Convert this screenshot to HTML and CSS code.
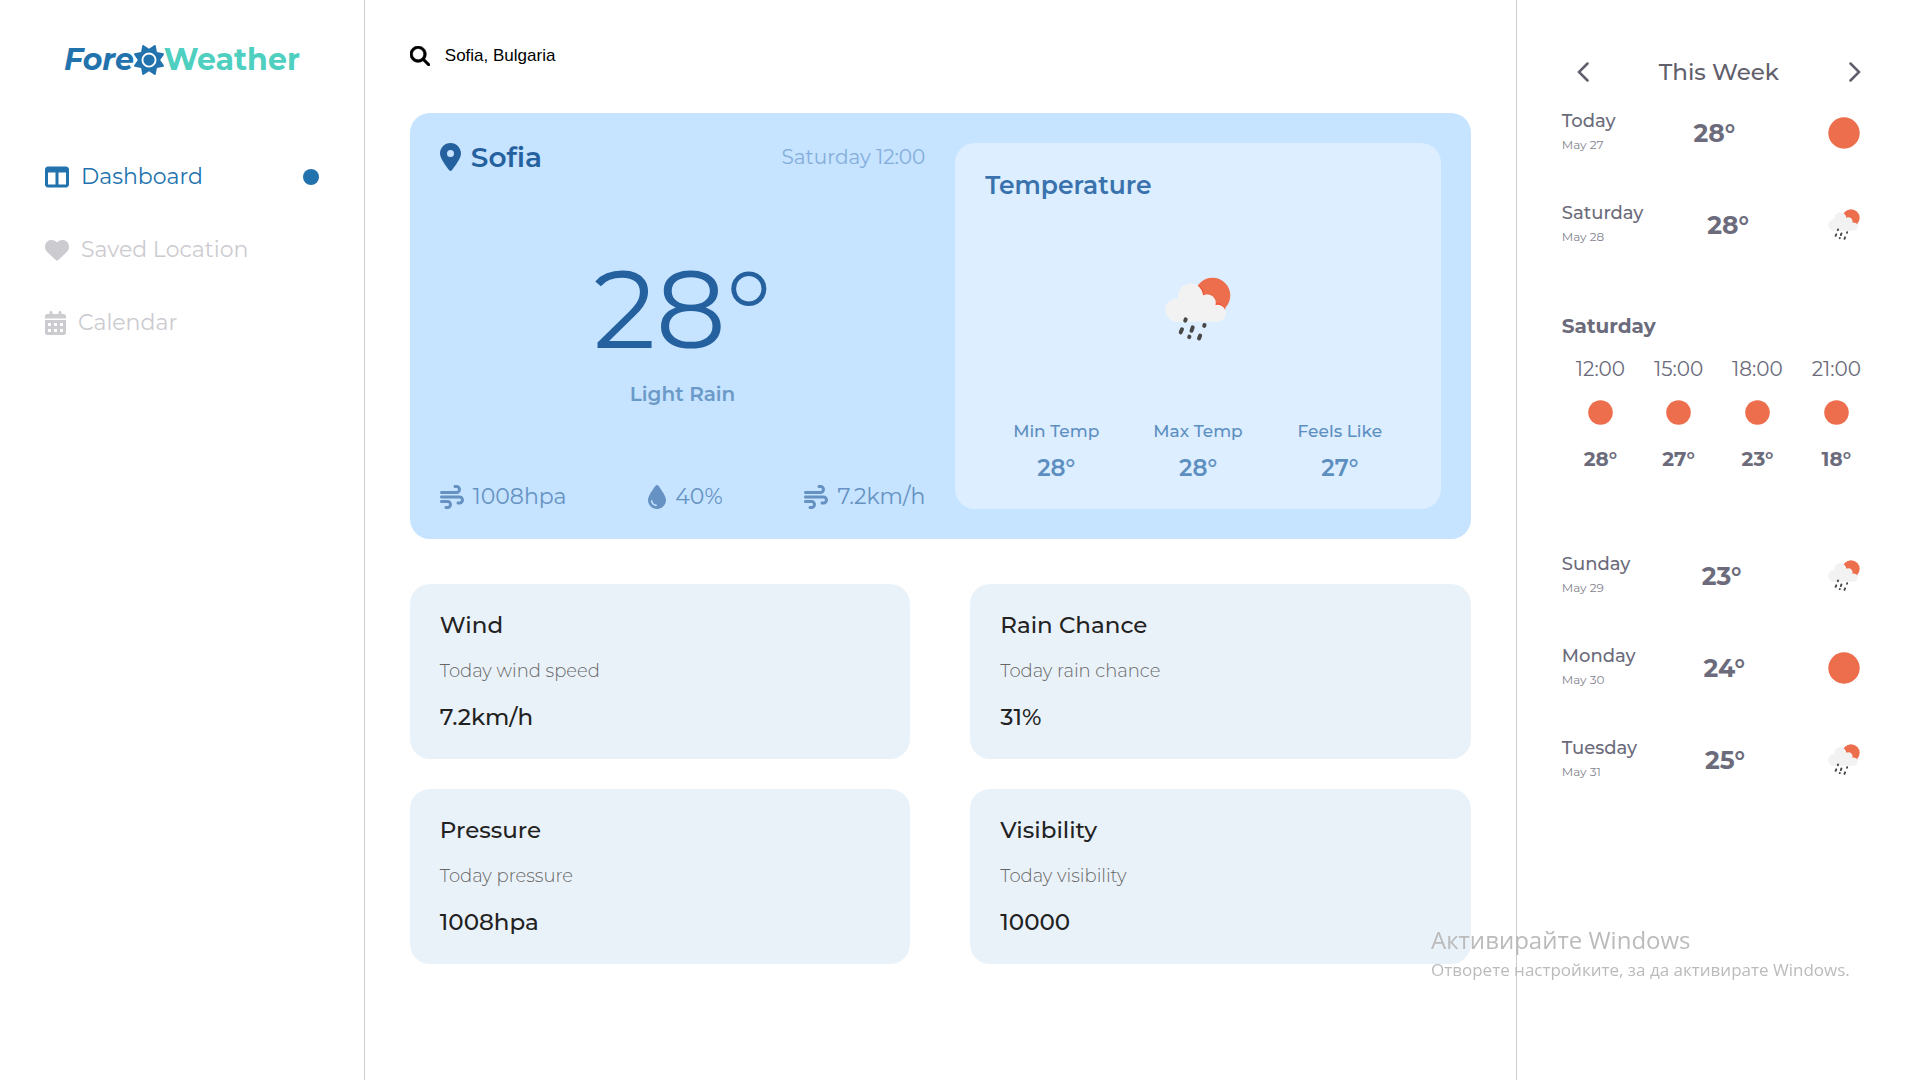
FILE: index.html
```html
<!DOCTYPE html>
<html lang="en">
<head>
<meta charset="utf-8">
<title>ForeWeather</title>
<link rel="stylesheet" href="styles.css">
</head>
<body>
<svg class="sprite" aria-hidden="true">
  <symbol id="sun-logo" viewBox="0 0 512 512"><path d="M361.5 1.2c5 2.1 8.6 6.6 9.6 11.9L391 121l107.9 19.8c5.3 1 9.8 4.6 11.9 9.6s1.5 10.7-1.6 15.2L446.9 256l62.3 90.3c3.1 4.5 3.7 10.2 1.6 15.2s-6.6 8.6-11.9 9.6L391 391 371.1 498.9c-1 5.3-4.6 9.8-9.6 11.9s-10.7 1.5-15.2-1.6L256 446.9l-90.3 62.3c-4.5 3.1-10.2 3.7-15.2 1.6s-8.6-6.6-9.6-11.9L121 391 13.1 371.1c-5.3-1-9.8-4.6-11.9-9.6s-1.5-10.7 1.6-15.2L65.1 256 2.8 165.7c-3.1-4.5-3.7-10.2-1.6-15.2s6.6-8.6 11.9-9.6L121 121 140.9 13.1c1-5.3 4.6-9.8 9.6-11.9s10.7-1.5 15.2 1.6L256 65.1 346.3 2.8c4.5-3.1 10.2-3.7 15.2-1.6zM160 256a96 96 0 1 1 192 0 96 96 0 1 1 -192 0zm224 0a128 128 0 1 0 -256 0 128 128 0 1 0 256 0z"/></symbol>
  <symbol id="columns" viewBox="0 0 512 512"><path d="M0 96C0 60.7 28.7 32 64 32H448c35.3 0 64 28.7 64 64V416c0 35.3-28.7 64-64 64H64c-35.3 0-64-28.7-64-64V96zm64 64V416H224V160H64zm384 0H288V416H448V160z"/></symbol>
  <symbol id="heart" viewBox="0 0 512 512"><path d="M47.6 300.4L228.3 469.1c7.5 7 17.4 10.9 27.7 10.9s20.2-3.9 27.7-10.9L464.4 300.4c30.4-28.3 47.6-68 47.6-109.5v-5.8c0-69.9-50.5-129.5-119.4-141C347 36.5 300.6 51.4 268 84L256 96 244 84c-32.6-32.6-79-47.5-124.6-39.9C50.5 55.6 0 115.2 0 185.1v5.8c0 41.5 17.2 81.2 47.6 109.5z"/></symbol>
  <symbol id="calendar" viewBox="0 0 448 512"><path fill-rule="evenodd" d="M128 0c17.700 0 32 14.300 32 32V64H288V32c0-17.700 14.300-32 32-32s32 14.300 32 32V64h48c26.500 0 48 21.500 48 48v48H0V112C0 85.500 21.500 64 48 64H96V32c0-17.700 14.300-32 32-32zM0 192H448V464c0 26.500-21.500 48-48 48H48c-26.500 0-48-21.500-48-48V192zM64 256v64h64v-64zM192 256v64h64v-64zM320 256v64h64v-64zM64 384v64h64v-64zM192 384v64h64v-64zM320 384v64h64v-64z"/></symbol>
  <symbol id="search" viewBox="0 0 512 512"><path stroke="#000" stroke-width="16" d="M416 208c0 45.900-14.900 88.300-40 122.700L502.600 457.400c12.500 12.500 12.500 32.800 0 45.300s-32.800 12.500-45.300 0L330.700 376c-34.400 25.200-76.800 40-122.700 40C93.100 416 0 322.900 0 208S93.100 0 208 0S416 93.100 416 208zM208 352a144 144 0 1 0 0-288 144 144 0 1 0 0 288z"/></symbol>
  <symbol id="pin" viewBox="0 0 384 512"><path d="M215.700 499.200C267 435 384 279.400 384 192C384 86 298 0 192 0S0 86 0 192c0 87.400 117 243 168.300 307.200c12.300 15.300 35.100 15.300 47.400 0zM192 128a64 64 0 1 1 0 128 64 64 0 1 1 0-128z"/></symbol>
  <symbol id="wind" viewBox="0 0 512 512"><path d="M288 32c0 17.700 14.300 32 32 32h32c17.700 0 32 14.300 32 32s-14.300 32-32 32H32c-17.700 0-32 14.300-32 32s14.300 32 32 32H352c53 0 96-43 96-96s-43-96-96-96H320c-17.700 0-32 14.300-32 32zm64 352c0 17.700 14.300 32 32 32h32c53 0 96-43 96-96s-43-96-96-96H32c-17.700 0-32 14.300-32 32s14.300 32 32 32H416c17.700 0 32 14.300 32 32s-14.300 32-32 32H384c-17.700 0-32 14.300-32 32zM128 512h32c53 0 96-43 96-96s-43-96-96-96H32c-17.700 0-32 14.300-32 32s14.300 32 32 32H160c17.700 0 32 14.300 32 32s-14.300 32-32 32H128c-17.700 0-32 14.300-32 32s14.300 32 32 32z"/></symbol>
  <symbol id="drop" viewBox="0 0 384 512"><path d="M192 512C86 512 0 426 0 320C0 228.800 130.200 57.700 166.600 11.700C172.600 4.200 181.500 0 191.100 0h1.800c9.600 0 18.500 4.200 24.500 11.700C253.800 57.700 384 228.800 384 320c0 106-86 192-192 192zM96 336c0-8.800-7.200-16-16-16s-16 7.200-16 16c0 61.900 50.100 112 112 112c8.800 0 16-7.200 16-16s-7.200-16-16-16c-44.200 0-80-35.800-80-80z"/></symbol>
  <symbol id="clear" viewBox="0 0 32 32"><circle cx="16" cy="16" r="15.700" fill="#ec6e4c"/></symbol>
  <symbol id="rain" viewBox="0 0 66 66">
    <circle cx="47.500" cy="18.500" r="17.800" fill="#ec6e4c"/>
    <g fill="#f2f2f2">
      <path d="M34.500 9.500A12.600 12.600 0 0 1 38 18.300A9.500 9.500 0 0 1 50.500 27A9 9 0 0 1 60 32.500" fill="none" stroke="#ef5330" stroke-width="1.500"/>
      <circle cx="25.500" cy="19" r="12.500"/><circle cx="12" cy="33" r="11.700"/><circle cx="42" cy="26" r="8.800"/><circle cx="52.500" cy="36.200" r="8.500"/><path d="M12 22H43L53 36V44.700H12z"/>
    </g>
    <g stroke="#484848" stroke-width="4" stroke-linecap="round"><path d="M20.700 42.300L20.200 43.700M17 52.300L15.700 55.300M27.700 50.300L26.500 53.800M39.500 48L39.200 48.900M24.400 59.600L24.200 60.200M35.200 58.500L34 61.500"/></g>
  </symbol>
</svg>

<div class="app">
  <aside class="sidebar">
    <a class="logo" href="#"><em>Fore</em><svg class="logo-icon"><use href="#sun-logo"/></svg><span>Weather</span></a>
    <nav class="menu">
      <a class="menu-item active" href="#"><svg class="icon"><use href="#columns"/></svg>Dashboard<i class="dot"></i></a>
      <a class="menu-item" href="#"><svg class="icon"><use href="#heart"/></svg>Saved Location</a>
      <a class="menu-item" href="#"><svg class="icon slim"><use href="#calendar"/></svg>Calendar</a>
    </nav>
  </aside>

  <main class="main">
    <form class="search">
      <label for="city" aria-label="Search city"><svg><use href="#search"/></svg></label>
      <input id="city" type="text" value="Sofia, Bulgaria">
    </form>

    <section class="hero">
      <div class="current">
        <header class="current-head">
          <h1><svg><use href="#pin"/></svg>Sofia</h1>
          <time>Saturday 12:00</time>
        </header>
        <div class="now">
          <p class="degrees">28°</p>
          <p class="condition">Light Rain</p>
        </div>
        <ul class="stats">
          <li><svg class="icon"><use href="#wind"/></svg>1008hpa</li>
          <li><svg class="icon drop"><use href="#drop"/></svg>40%</li>
          <li><svg class="icon"><use href="#wind"/></svg>7.2km/h</li>
        </ul>
      </div>
      <div class="temperature">
        <h2>Temperature</h2>
        <svg class="weather"><use href="#rain"/></svg>
        <dl class="ranges">
          <div><dt>Min Temp</dt><dd>28°</dd></div>
          <div><dt>Max Temp</dt><dd>28°</dd></div>
          <div><dt>Feels Like</dt><dd>27°</dd></div>
        </dl>
      </div>
    </section>

    <section class="cards">
      <article class="card"><h3>Wind</h3><p>Today wind speed</p><strong>7.2km/h</strong></article>
      <article class="card"><h3>Rain Chance</h3><p>Today rain chance</p><strong>31%</strong></article>
      <article class="card"><h3>Pressure</h3><p>Today pressure</p><strong>1008hpa</strong></article>
      <article class="card"><h3>Visibility</h3><p>Today visibility</p><strong>10000</strong></article>
    </section>
  </main>

  <aside class="week">
    <header class="week-head">
      <button type="button" aria-label="Previous week"><svg viewBox="0 0 12 20"><path d="M10.500 1.500L2 10L10.500 18.500"/></svg></button>
      <h2>This Week</h2>
      <button type="button" aria-label="Next week"><svg viewBox="0 0 12 20"><path d="M1.500 1.500L10 10L1.500 18.500"/></svg></button>
    </header>
    <div class="day"><div><h3>Today</h3><time>May 27</time></div><b>28°</b><svg><use href="#clear"/></svg></div>
    <div class="day"><div><h3>Saturday</h3><time>May 28</time></div><b>28°</b><svg><use href="#rain"/></svg></div>
    <section class="hourly">
      <h3>Saturday</h3>
      <ul>
        <li><time>12:00</time><svg><use href="#clear"/></svg><b>28°</b></li>
        <li><time>15:00</time><svg><use href="#clear"/></svg><b>27°</b></li>
        <li><time>18:00</time><svg><use href="#clear"/></svg><b>23°</b></li>
        <li><time>21:00</time><svg><use href="#clear"/></svg><b>18°</b></li>
      </ul>
    </section>
    <div class="day"><div><h3>Sunday</h3><time>May 29</time></div><b>23°</b><svg><use href="#rain"/></svg></div>
    <div class="day"><div><h3>Monday</h3><time>May 30</time></div><b>24°</b><svg><use href="#clear"/></svg></div>
    <div class="day"><div><h3>Tuesday</h3><time>May 31</time></div><b>25°</b><svg><use href="#rain"/></svg></div>
  </aside>
</div>

<div class="activation" lang="bg">
  <p class="activation-title">Активирайте Windows</p>
  <p>Отворете настройките, за да активирате Windows.</p>
</div>
</body>
</html>
```
FILE: styles.css
```css
* { box-sizing: border-box; margin: 0; padding: 0; }

body {
  font-family: Montserrat, Inter, sans-serif;
  color: #6b6b7b;
  background: #fff;
}

ul { list-style: none; }
a { text-decoration: none; }
svg { display: block; fill: currentColor; flex: none; }
.sprite { display: none; }
.icon { width: 24px; height: 24px; }

.app {
  display: grid;
  grid-template-columns: 19fr 60fr 21fr;
  min-height: 100vh;
}

/* Sidebar */
.sidebar {
  padding: 41px 45px;
  border-right: 1px solid #ccc;
}
.logo {
  display: flex;
  align-items: center;
  justify-content: center;
  font-size: 30px;
  line-height: 38px;
  font-weight: 700;
  color: #2272ad;
}
.logo span { color: #4fcfbf; }
.logo-icon { width: 30px; height: 30px; }
.menu {
  display: flex;
  flex-direction: column;
  gap: 43px;
  margin-top: 83px;
}
.menu-item {
  display: flex;
  align-items: center;
  gap: 12px;
  font-size: 22px;
  line-height: 30px;
  font-weight: 400;
  color: #cccbd0;
}
.menu-item.active { color: #2272ad; }
.icon.slim { width: 21px; }
.dot {
  width: 16px;
  height: 16px;
  margin-left: auto;
  border-radius: 50%;
  background: currentColor;
}

/* Main column */
.main {
  padding: 44px 45px;
  border-right: 1px solid #ccc;
}
.search {
  display: flex;
  align-items: center;
  gap: 15px;
  height: 24px;
  margin-bottom: 45px;
  color: #000;
}
.search svg { width: 20px; height: 20px; }
.search input {
  flex: 1;
  border: 0;
  outline: 0;
  font: 17px/24px "Liberation Sans", Arial, sans-serif;
  color: #000;
}

.hero {
  display: grid;
  grid-template-columns: 1fr 1fr;
  gap: 30px;
  min-height: 426px;
  padding: 30px;
  border-radius: 20px;
  background: #c6e3ff;
}
.current {
  display: flex;
  flex-direction: column;
  justify-content: space-between;
}
.current-head,
.current-head h1 {
  display: flex;
  align-items: center;
  justify-content: space-between;
}
.current-head h1 {
  gap: 10px;
  font-size: 28px;
  line-height: 28px;
  font-weight: 600;
  color: #24619e;
}
.current-head svg { width: 21px; height: 28px; }
.current-head time {
  font-size: 20px;
  line-height: 28px;
  font-weight: 400;
  color: #84aedb;
}
.now { padding-bottom: 4px; text-align: center; }
.degrees {
  font-size: 110px;
  line-height: 136px;
  font-weight: 400;
  color: #24619e;
}
.condition {
  font-size: 20px;
  line-height: 34px;
  font-weight: 600;
  color: #6b99c8;
}
.stats {
  display: flex;
  justify-content: space-between;
  color: #6592c2;
}
.stats li {
  display: flex;
  align-items: center;
  gap: 9px;
  font-size: 22px;
  line-height: 24px;
  font-weight: 400;
}
.icon.drop { width: 18px; }

.temperature {
  display: flex;
  flex-direction: column;
  align-items: center;
  justify-content: space-between;
  padding: 27px 30px 28px;
  border-radius: 20px;
  background: #dceeff;
}
.temperature h2 {
  align-self: stretch;
  font-size: 25px;
  line-height: 30px;
  font-weight: 600;
  color: #3972ad;
}
.weather { width: 66px; height: 66px; }
.ranges {
  display: grid;
  grid-template-columns: repeat(3, 1fr);
  align-self: stretch;
  text-align: center;
  color: #5d8ec0;
}
.ranges dt { font-size: 17px; line-height: 24px; font-weight: 500; }
.ranges dd { margin-top: 12px; font-size: 23px; line-height: 26px; font-weight: 600; }

.cards {
  display: grid;
  grid-template-columns: 1fr 1fr;
  gap: 30px 60px;
  margin-top: 45px;
}
.card {
  display: flex;
  flex-direction: column;
  gap: 24px;
  padding: 30px;
  border-radius: 20px;
  background: #eaf2f9;
  color: #222;
}
.card h3,
.card strong { font-size: 23px; line-height: 23px; font-weight: 500; }
.card p { font-size: 18px; line-height: 21px; font-weight: 300; color: #666; }

/* Forecast column */
.week { padding: 57px 59px 45px 45px; }
.week-head {
  display: flex;
  align-items: center;
  justify-content: space-between;
  padding-left: 15px;
  margin-bottom: 22px;
  color: #5f606b;
}
.week-head h2 { font-size: 23px; line-height: 30px; font-weight: 500; }
.week-head button { border: 0; background: none; color: inherit; }
.week-head svg {
  width: 12px;
  height: 20px;
  fill: none;
  stroke: currentColor;
  stroke-width: 2.5;
  stroke-linecap: round;
}
.day {
  display: flex;
  align-items: center;
  justify-content: space-between;
  height: 48px;
  margin-bottom: 44px;
}
.day h3 { font-size: 18px; line-height: 24px; font-weight: 500; }
.day time { display: block; font-size: 12px; line-height: 24px; font-weight: 400; color: #84848f; }
.day b { font-size: 25px; line-height: 30px; font-weight: 700; }
.day svg { width: 34px; height: 32px; margin-left: 14px; }

.hourly { padding: 21px 0 81px; }
.hourly h3 { font-size: 20px; line-height: 24px; font-weight: 700; }
.hourly ul {
  display: flex;
  justify-content: space-between;
  margin-top: 19px;
  padding-left: 14px;
}
.hourly li {
  display: flex;
  flex-direction: column;
  align-items: center;
}
.hourly time { font-size: 20px; line-height: 24px; font-weight: 400; }
.hourly svg { width: 25px; height: 25px; margin: 19px 0 22px; }
.hourly b { font-size: 20px; line-height: 24px; font-weight: 700; }

/* System notice floating over the page */
.activation {
  position: fixed;
  right: 76px;
  bottom: 98px;
  width: 413px;
  font-family: "Segoe UI", "Open Sans", sans-serif;
  font-size: 17px;
  line-height: 24px;
  white-space: nowrap;
  color: #bbb;
  pointer-events: none;
}
.activation-title { font-size: 24px; line-height: 36px; }
```
